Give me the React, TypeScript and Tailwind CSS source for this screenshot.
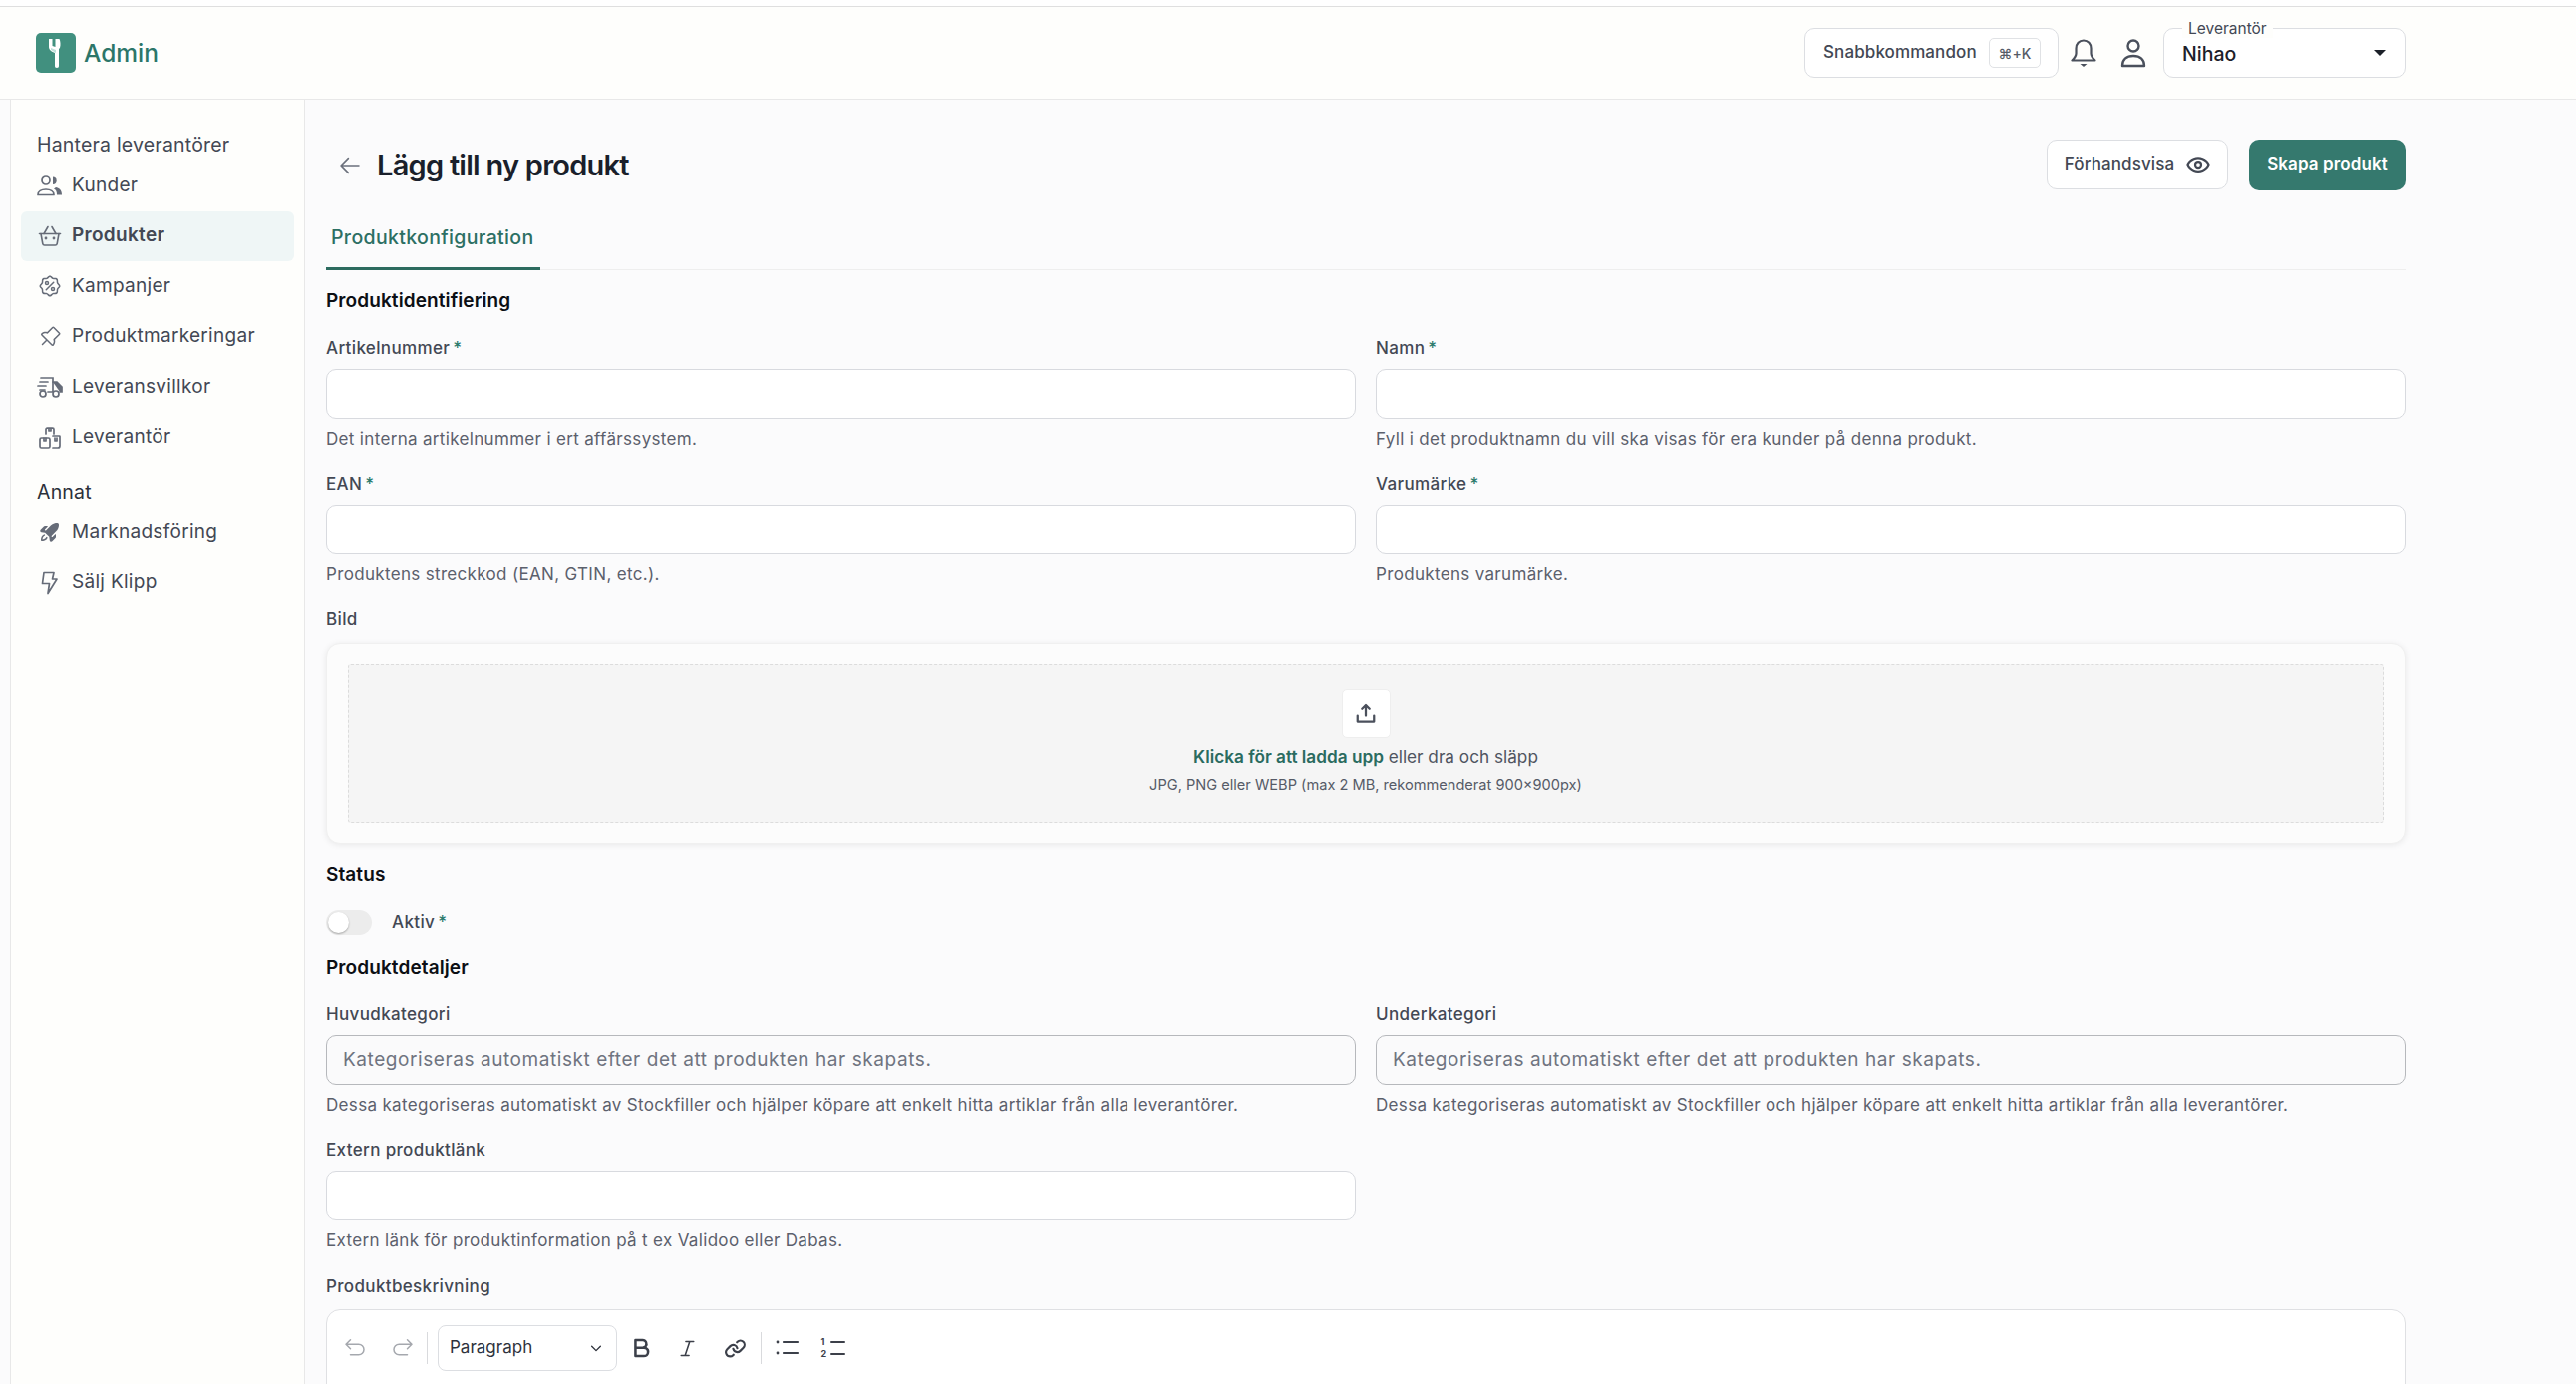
import React from "react";
import { PiSealPercent, PiPushPin, PiRocketLaunchFill, PiEyeBold, PiUploadSimpleBold, PiArrowLeft, PiArrowUUpLeft, PiArrowUUpRight, PiTextBBold, PiTextItalic, PiLinkBold, PiCaretDownBold } from "react-icons/pi";

const font = { fontFamily: "Inter, 'Noto Sans', sans-serif" };

function KunderIcon() {
  return (
    <svg width="26" height="22" viewBox="0 0 26 22" fill="none" stroke="#666c78" strokeWidth="1.7">
      <circle cx="9" cy="6" r="4" />
      <path d="M1 20.5c0-3.5 3.5-5.5 8-5.5s8 2 8 5.5z" strokeLinejoin="round" />
      <path d="M16 2.5a3.7 3.7 0 0 1 0 7.4z" fill="#666c78" stroke="none" />
      <path d="M19 13c3 .5 6 2.500 6 7.500h-5c0-3-1-5.500-3-6z" fill="#666c78" stroke="none" />
    </svg>
  );
}
function BasketIcon() {
  return (
    <svg width="24" height="22" viewBox="0 0 24 22" fill="none" stroke="#666c78" strokeWidth="1.6" strokeLinecap="round" strokeLinejoin="round">
      <path d="M1.500 8.500h21" />
      <path d="M3 8.500l1.800 10c.2 1 .8 1.500 1.800 1.500h10.800c1 0 1.600-.5 1.800-1.500l1.800-10" />
      <path d="M6 8.500L10 1.500M18 8.500L14 1.500" />
      <circle cx="8" cy="13" r=".6" fill="#666c78" />
      <circle cx="16" cy="13" r=".6" fill="#666c78" />
    </svg>
  );
}
function BoltIcon() {
  return (
    <svg width="18" height="24" viewBox="0 0 18 24" fill="none" stroke="#666c78" strokeWidth="1.700" strokeLinejoin="round" strokeLinecap="round">
      <path d="M3 1.500h10l-1.500 6.500H16L7 22.500l1.500-10H1.500z" />
    </svg>
  );
}
function BellIcon() {
  return (
    <svg width="26" height="30" viewBox="0 0 26 30" fill="none" stroke="#4a505c" strokeWidth="2.200" strokeLinejoin="round">
      <path d="M13 2.500c-4.500 0-7.500 3.500-7.500 8v5c0 2.500-2 5-4 7h23c-2-2-4-4.500-4-7v-5c0-4.500-3-8-7.500-8z" />
      <path d="M9.500 26h7l-3.500 3z" fill="#4a505c" stroke="none" />
    </svg>
  );
}
function TruckIcon() {
  return (
    <svg width="26" height="22" viewBox="0 0 26 22" fill="none" stroke="#666c78" strokeWidth="1.7" strokeLinecap="round">
      <path d="M4 2h12v14H11M3 6h8M1 10h8M3 14h5" />
      <path d="M16 6h4l5 5v5h-2" fill="#666c78" />
      <circle cx="6" cy="18" r="3" />
      <circle cx="19" cy="18" r="3" />
    </svg>
  );
}
function BoxesIcon() {
  return (
    <svg width="22" height="22" viewBox="0 0 22 22" fill="none" stroke="#666c78" strokeWidth="1.7" strokeLinecap="round" strokeLinejoin="round">
      <path d="M7 7V2.500c0-.8.500-1.300 1.200-1.300h5.600c.7 0 1.200.5 1.200 1.300V7" />
      <path d="M10 1.500v2.500h2V1.500" />
      <rect x="1" y="11" width="10" height="10" rx="1.500" />
      <path d="M14 9h6.500c.3 0 .5.200.5.500V19c0 1.200-.8 2-2 2h-5" />
      <path d="M5 11v3h2v-3M16 11v3h2v-3" />
    </svg>
  );
}
function Logo() {
  return (
    <div className="w-10 h-10 rounded-[5px] bg-[#41907f] flex items-center justify-center shrink-0">
      <svg width="40" height="40" viewBox="0 0 40 40">
        <path d="M13 6h3.500v7l3 1V6h4c1 2 1.500 6 .5 9l-1 1v17c0 1-.5 2-2 2s-2-1-2-2V20c-3-1-6-3-6-6z" fill="#fff" />
        <path d="M15 15l5 2v3l-5-3z" fill="#bfe0da" />
      </svg>
    </div>
  );
}
function UserIcon() {
  return (
    <svg width="26" height="30" viewBox="0 0 26 30" fill="none" stroke="#4a505c" strokeWidth="2.400">
      <circle cx="13" cy="8" r="5.500" />
      <path d="M2 28c0-6 4-10 11-10s11 4 11 10z" strokeLinejoin="round" />
    </svg>
  );
}
function BulletsIcon() {
  return (
    <svg width="26" height="22" viewBox="0 0 26 22" fill="#3c404a" stroke="#3c404a" strokeWidth="2.200" strokeLinecap="round">
      <circle cx="3" cy="5" r="1.400" stroke="none" fill="#3c404a" />
      <circle cx="3" cy="16" r="1.400" stroke="none" fill="#3c404a" />
      <path d="M9 5h14M9 16h14" />
    </svg>
  );
}
function NumbersIcon() {
  return (
    <div className="relative w-[26px] h-[24px]">
      <span className="absolute left-0 top-0 text-[9px] leading-[12px] font-bold text-[#3c404a]">1</span>
      <span className="absolute left-0 top-[12px] text-[9px] leading-[12px] font-bold text-[#3c404a]">2</span>
      <span className="absolute left-[9px] top-[5px] w-[15px] h-[2px] rounded-full bg-[#3c404a]" />
      <span className="absolute left-[9px] top-[17px] w-[15px] h-[2px] rounded-full bg-[#3c404a]" />
    </div>
  );
}

function NavItem({ icon, label, active }: { icon: React.ReactNode; label: string; active?: boolean }) {
  return (
    <div className={`h-[50px] mb-[0.5px] rounded-md pl-4 flex items-center gap-[9px] text-[19px] tracking-[0.3px] ${active ? "bg-[#eff6f6] font-semibold" : ""} text-[#434854]`}>
      <span className="w-[26px] flex items-center justify-center">{icon}</span>
      <span>{label}</span>
    </div>
  );
}

function Label({ text, req }: { text: string; req?: boolean }) {
  return (
    <div className="text-[17px] tracking-[0.35px] font-[450] text-[#434854] h-[22px] leading-[22px] -mt-[1px] mb-[1px]">
      {text}
      {req && <span className="text-[#2b7a6c] ml-[3px]">*</span>}
    </div>
  );
}

function Field({ label, req, help, placeholder }: { label: string; req?: boolean; help: string; placeholder?: string }) {
  return (
    <div className="flex flex-col">
      <Label text={label} req={req} />
      <div className={`mt-[9px] h-[50px] rounded-[10px] border flex items-center px-4 pt-[1px] text-[19px] tracking-[0.57px] ${placeholder ? "border-[#b6b8bc] bg-[#fafafb] text-[#6f7480]" : "border-[#d8dadf] bg-white"}`}>
        {placeholder}
      </div>
      <div className="mt-[9px] mb-[1px] h-[22px] leading-[22px] text-[17px] tracking-[0.33px] text-[#5b606c]">{help}</div>
    </div>
  );
}

function Heading({ children }: { children: React.ReactNode }) {
  return <div className="text-[19px] tracking-[0.1px] font-semibold text-[#0c0f14] h-[26px] leading-[26px]">{children}</div>;
}

const catPlaceholder = "Kategoriseras automatiskt efter det att produkten har skapats.";
const catHelp = "Dessa kategoriseras automatiskt av Stockfiller och hjälper köpare att enkelt hitta artiklar från alla leverantörer.";

export default function App() {
  return (
    <div style={font} className="h-screen overflow-hidden flex flex-col bg-[#fbfbfc]">
      <div className="h-[7px] shrink-0 bg-white border-b border-[#dfdfdf]" />
      <header className="h-[93px] shrink-0 bg-[#fefefc] border-b border-[#e8e8e8] flex items-center justify-between pl-[36px] pr-[171px]">
        <div className="flex items-center gap-[8px]">
          <Logo />
          <span className="text-[24.500px] font-medium text-[#2c7669]">Admin</span>
        </div>
        <div className="flex items-center">
          <div className="h-[50px] w-[255px] rounded-[10px] border border-[#dcdee2] bg-white flex items-center justify-between pl-[18px] pr-[17px] text-[17px] tracking-[0.1px] font-medium text-[#434854]">
            <span>Snabbkommandon</span>
            <span className="h-[30px] w-[52px] rounded-[5px] border border-[#e0e2e5] text-[14px] flex items-center justify-center text-[#555b66]">⌘+K</span>
          </div>
          <div className="w-[50px] flex justify-center"><BellIcon /></div>
          <div className="w-[50px] flex justify-center"><UserIcon /></div>
          <div className="relative h-[50px] w-[243px] ml-[5px] rounded-[10px] border border-[#dcdee2] bg-white flex items-center justify-between pl-[18px] pr-[15px]">
            <span className="absolute left-[18px] -top-[9px] px-[6px] bg-[#fefefc] text-[15.500px] leading-[18px] text-[#434854]">Leverantör</span>
            <span className="mt-[3px] text-[19.500px] font-medium text-[#1c2029]">Nihao</span>
            <span className="w-0 h-0 border-x-[6px] border-x-transparent border-t-[6px] border-t-[#1c2029] mr-[4px]" />
          </div>
        </div>
      </header>
      <div className="flex-1 flex min-h-0">
        <aside className="ml-[10px] w-[296px] shrink-0 bg-[#fefefc] border-x border-[#e8e8e8] pl-[10px] pr-[10px] pt-[32px]">
          <div className="pl-[16px] text-[19.500px] tracking-[0.2px] h-[26px] leading-[26px] text-[#434854]">Hantera leverantörer</div>
          <div className="mt-[3px]">
            <NavItem icon={<KunderIcon />} label="Kunder" />
            <NavItem active icon={<BasketIcon />} label="Produkter" />
            <NavItem icon={<PiSealPercent size={24} color="#666c78" />} label="Kampanjer" />
            <NavItem icon={<PiPushPin size={24} color="#666c78" />} label="Produktmarkeringar" />
            <NavItem icon={<TruckIcon />} label="Leveransvillkor" />
            <NavItem icon={<BoxesIcon />} label="Leverantör" />
          </div>
          <div className="pl-[16px] mt-[16.500px] text-[19.500px] tracking-[0.2px] h-[26px] leading-[26px] text-[#2c303a]">Annat</div>
          <div className="mt-[3px]">
            <NavItem icon={<PiRocketLaunchFill size={24} color="#666c78" />} label="Marknadsföring" />
            <NavItem icon={<BoltIcon />} label="Sälj Klipp" />
          </div>
        </aside>
        <main className="flex-1 min-w-0 pl-[21px] pr-[171px] overflow-hidden">
          <div className="flex items-center justify-between pt-[40px] h-[90px]">
            <div className="flex items-center pl-[11px] gap-[14px] pt-[2px]">
              <PiArrowLeft size={26} color="#6b707c" />
              <h1 className="text-[29px] font-semibold tracking-[-0.75px] text-[#1a1f2b]">Lägg till ny produkt</h1>
            </div>
            <div className="flex items-center gap-[21px]">
              <div className="h-[50px] w-[182px] rounded-[10px] border border-[#dcdee2] bg-white flex items-center justify-center gap-[12px] text-[17px] tracking-[0.1px] font-medium text-[#434854]">
                Förhandsvisa <PiEyeBold size={24} color="#434854" />
              </div>
              <div className="h-[51px] w-[157px] rounded-[10px] bg-[#35796e] flex items-center justify-center text-[17px] tracking-[0.1px] font-semibold text-white">Skapa produkt</div>
            </div>
          </div>
          <div className="mt-[22px] h-[59px] border-b border-[#eeeeee]">
            <div className="w-[215px] h-[59px] border-b-[3px] border-[#2c6b5f] pl-[5px] pt-[12px] text-[19.500px] tracking-[0.35px] font-medium text-[#2c6f63]">Produktkonfiguration</div>
          </div>
          <div className="mt-[18px]"><Heading>Produktidentifiering</Heading></div>
          <div className="mt-[24px] grid grid-cols-2 gap-x-[20px] gap-y-[23px]">
            <Field label="Artikelnummer" req help="Det interna artikelnummer i ert affärssystem." />
            <Field label="Namn" req help="Fyll i det produktnamn du vill ska visas för era kunder på denna produkt." />
            <Field label="EAN" req help="Produktens streckkod (EAN, GTIN, etc.)." />
            <Field label="Varumärke" req help="Produktens varumärke." />
          </div>
          <div className="mt-[23px]"><Label text="Bild" /></div>
          <div className="mt-[13px] h-[201px] rounded-[14px] bg-[#fcfcfc] border border-[#f0f0f0] shadow-[0_1px_6px_rgba(0,0,0,0.08)] px-[21px] py-[20px]">
            <div className="h-full rounded-[3px] bg-[#f5f5f5] border border-dashed border-[#dcdcdc] flex flex-col items-center pt-[24px]">
              <div className="w-[49px] h-[49px] rounded-[5px] bg-white border border-[#eeeeee] flex items-center justify-center"><PiUploadSimpleBold size={24} color="#4b505c" /></div>
              <div className="mt-[7px] text-[17.200px] leading-[24px] text-[#4f5460]"><span className="font-semibold text-[#2a6b5f]">Klicka för att ladda upp</span> eller dra och släpp</div>
              <div className="mt-[6px] text-[14.600px] leading-[20px] text-[#565b67]">JPG, PNG eller WEBP (max 2 MB, rekommenderat 900x900px)</div>
            </div>
          </div>
          <div className="mt-[19px]"><Heading>Status</Heading></div>
          <div className="mt-[22px] flex items-center h-[25px]">
            <div className="relative w-[46px] h-[25px] rounded-full bg-[#ececec]">
              <div className="absolute left-[2px] top-[2px] w-[21px] h-[21px] rounded-full bg-white shadow-[0_1px_2px_rgba(0,0,0,0.3)]" />
            </div>
            <div className="ml-[20px]"><Label text="Aktiv" req /></div>
          </div>
          <div className="mt-[20px]"><Heading>Produktdetaljer</Heading></div>
          <div className="mt-[23px] grid grid-cols-2 gap-x-[20px] gap-y-[23px]">
            <Field label="Huvudkategori" help={catHelp} placeholder={catPlaceholder} />
            <Field label="Underkategori" help={catHelp} placeholder={catPlaceholder} />
            <Field label="Extern produktlänk" help="Extern länk för produktinformation på t ex Validoo eller Dabas." />
          </div>
          <div className="mt-[24px]"><Label text="Produktbeskrivning" /></div>
          <div className="mt-[12px] h-[200px] rounded-t-[14px] border border-[#dfe0e3] bg-white flex items-start pl-[4px] pt-[15px]">
            <div className="w-[48px] h-[46px] flex items-center justify-center"><PiArrowUUpLeft size={24} color="#a5a8ae" /></div>
            <div className="w-[48px] h-[46px] flex items-center justify-center"><PiArrowUUpRight size={24} color="#a5a8ae" /></div>
            <div className="w-px h-[32px] bg-[#d9dadd] mt-[7px] mr-[10px]" />
            <div className="w-[180px] h-[46px] rounded-[8px] border border-[#dcdee2] flex items-center justify-between pl-[11px] pr-[13px] text-[17px] text-[#2e323c]">
              Paragraph <PiCaretDownBold size={14} color="#2e323c" />
            </div>
            <div className="w-[46px] h-[46px] flex items-center justify-center"><PiTextBBold size={27} color="#3c404a" /></div>
            <div className="w-[48px] h-[46px] flex items-center justify-center"><PiTextItalic size={25} color="#3c404a" /></div>
            <div className="w-[48px] h-[46px] flex items-center justify-center"><PiLinkBold size={23} color="#3c404a" /></div>
            <div className="w-px h-[32px] bg-[#d9dadd] mt-[7px] mx-[2px]" />
            <div className="w-[46px] h-[46px] flex items-center justify-center pl-[2px]"><BulletsIcon /></div>
            <div className="w-[46px] h-[46px] flex items-center justify-center pl-[3px]"><NumbersIcon /></div>
          </div>
        </main>
      </div>
    </div>
  );
}
